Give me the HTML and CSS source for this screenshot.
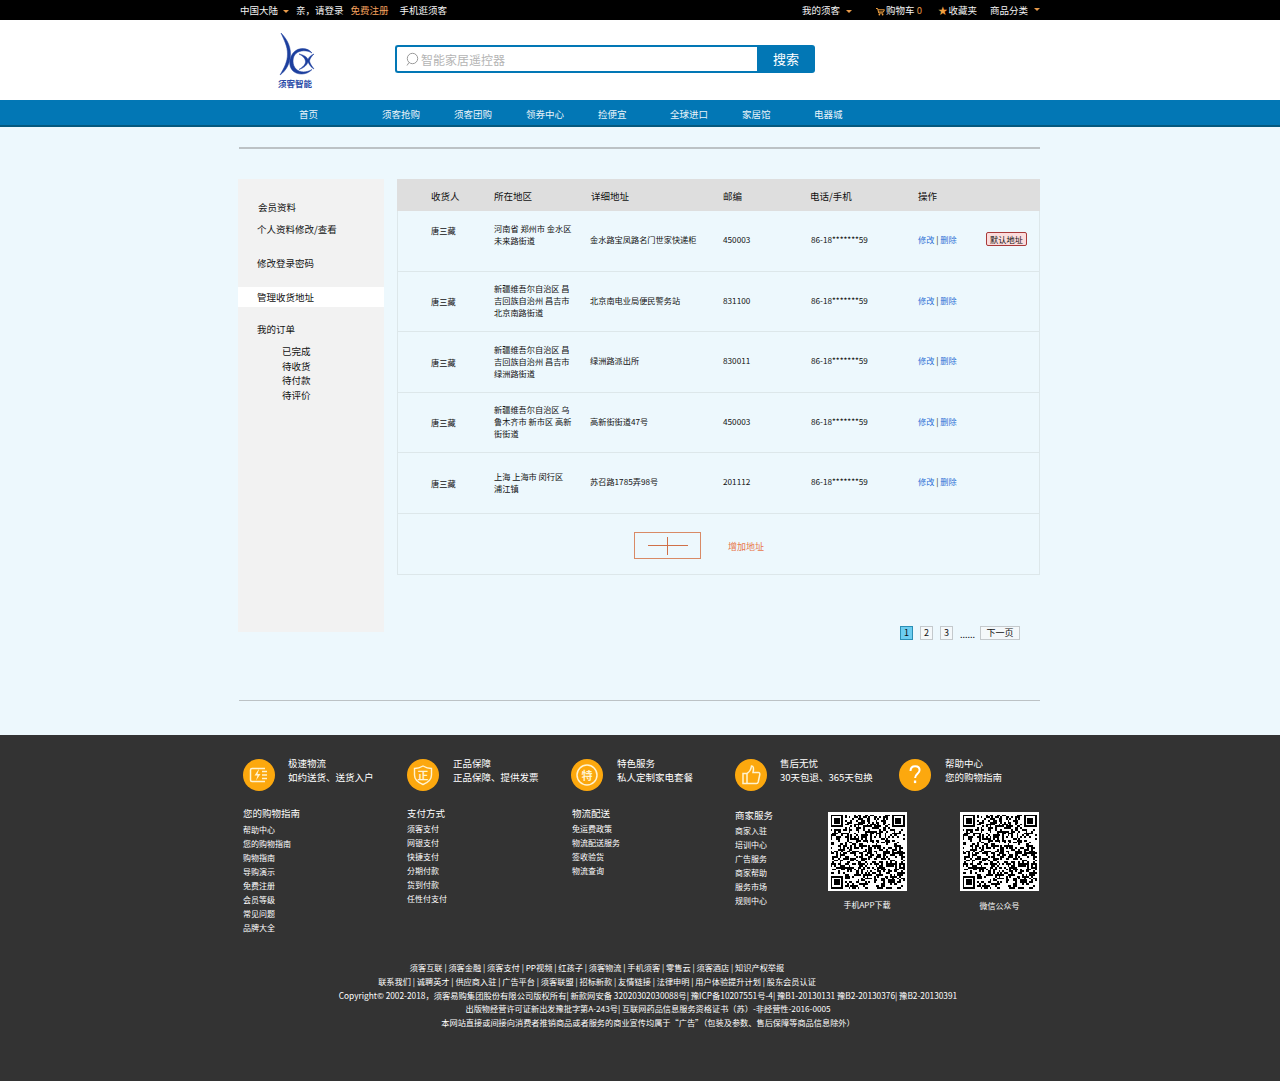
FILE: index.html
```html
<!DOCTYPE html>
<html lang="zh-CN">
    <head>
        <meta charset="UTF-8" />
        <title>管理收货地址</title>
        <link rel="stylesheet" href="styles.css">
    </head>
    <body>
        <div class="topbar">
            <div class="topbar-inner">
                <span>中国大陆</span><i class="caret first-caret"></i>
                <span class="login">亲，请登录</span>
                <span class="reg">免费注册</span>
                <span class="mobile">手机逛须客</span>
                <span class="top-right">
                    <span>我的须客</span><i class="caret my-caret"></i>
                    <svg class="cart" width="9" height="9" viewBox="0 0 9 9"><path d="M0 1.5h1.6l1.2 4.6h4.4M2 2.8h6.4l-1 2.2H2.6" fill="none" stroke="#f0a040" stroke-width="1"/><circle cx="3.4" cy="7.6" r="0.9" fill="#f0a040"/><circle cx="6.6" cy="7.6" r="0.9" fill="#f0a040"/></svg>
                    <span class="cart-text">购物车 <em>0</em></span>
                    <span class="star">★</span><span>收藏夹</span>
                    <span class="cats">商品分类</span><i class="caret cat-caret"></i>
                </span>
            </div>
        </div>

        <div class="header">
            <div class="logo">
                <svg width="40" height="50" viewBox="0 0 40 50">
                    <path class="logo-mark" d="M4 0C7 7 10.5 13 10.5 21C10.5 29 7 35 3 42C9 38 13.5 30 13.5 21C13.500 12 9 5 4 0Z"/>
                    <path class="logo-mark" d="M35 20C31 14.5 22 14 17 19C12 24 11 33 16 38C21 42.5 30 42 35 36.5C30 39.5 23 40 19 36C15 32 15 24 19 20.5C23 17 30 17 35 20Z"/>
                    <path class="logo-mark" d="M22 21C26 23 28 25 28.5 28C29 31 26 34 22 36.5C27 35 30 32 31 29C33 33 35 35 37 36C35 33 33 31 32.5 28C33 25 35 23 37 21C34 22 32 24 31 26.5C30 24 27 22 22 21Z"/>
                </svg>
                <div class="logo-text">须客智能</div>
            </div>
            <div class="search">
                <div class="search-input">
                    <svg width="15" height="15" viewBox="0 0 15 15"><circle cx="7.500" cy="6.500" r="5.200" fill="none" stroke="#9a9a9a" stroke-width="1"/><path d="M4 10.500L2 13.500" stroke="#9a9a9a" stroke-width="1"/></svg>
                    <span>智能家居遥控器</span>
                </div>
                <div class="search-btn">搜索</div>
            </div>
        </div>

        <div class="nav">
            <ul class="nav-list">
                <li class="home">首页</li>
                <li>须客抢购</li>
                <li>须客团购</li>
                <li>领券中心</li>
                <li>捡便宜</li>
                <li>全球进口</li>
                <li>家居馆</li>
                <li>电器城</li>
            </ul>
        </div>

        <div class="content">
            <div class="rule top-rule"></div>
            <div class="columns">
                <div class="sidebar">
                    <div class="side-title">会员资料</div>
                    <div class="side-item">个人资料修改/查看</div>
                    <div class="side-item pwd">修改登录密码</div>
                    <div class="side-item active">管理收货地址</div>
                    <div class="side-item orders">我的订单</div>
                    <ul class="side-sub">
                        <li>已完成</li>
                        <li>待收货</li>
                        <li>待付款</li>
                        <li>待评价</li>
                    </ul>
                </div>
                <div class="main">
                    <table class="addr">
                        <colgroup>
                            <col class="c1"><col class="c2"><col class="c3"><col class="c4"><col class="c5"><col class="c6"><col class="c7">
                        </colgroup>
                        <tr class="head">
                            <th>收货人</th><th>所在地区</th><th class="th-detail">详细地址</th><th>邮编</th><th class="th-phone">电话/手机</th><th colspan="2">操作</th>
                        </tr>
                        <tr>
                            <td class="name up">唐三藏</td>
                            <td class="region">河南省 郑州市 金水区 未来路街道<br>&nbsp;</td>
                            <td>金水路宝凤路名门世家快递柜</td>
                            <td>450003</td>
                            <td class="phone">86-18*******59</td>
                            <td class="ops"><a>修改</a> | <a>删除</a></td>
                            <td><span class="tag">默认地址</span></td>
                        </tr>
                        <tr>
                            <td class="name">唐三藏</td>
                            <td class="region">新疆维吾尔自治区 昌吉回族自治州 昌吉市 北京南路街道</td>
                            <td>北京南电业局便民警务站</td>
                            <td>831100</td>
                            <td class="phone">86-18*******59</td>
                            <td class="ops"><a>修改</a> | <a>删除</a></td>
                            <td></td>
                        </tr>
                        <tr>
                            <td class="name">唐三藏</td>
                            <td class="region">新疆维吾尔自治区 昌吉回族自治州 昌吉市 绿洲路街道</td>
                            <td>绿洲路派出所</td>
                            <td>830011</td>
                            <td class="phone">86-18*******59</td>
                            <td class="ops"><a>修改</a> | <a>删除</a></td>
                            <td></td>
                        </tr>
                        <tr>
                            <td class="name">唐三藏</td>
                            <td class="region">新疆维吾尔自治区 乌鲁木齐市 新市区 高新街街道</td>
                            <td>高新街街道47号</td>
                            <td>450003</td>
                            <td class="phone">86-18*******59</td>
                            <td class="ops"><a>修改</a> | <a>删除</a></td>
                            <td></td>
                        </tr>
                        <tr>
                            <td class="name">唐三藏</td>
                            <td class="region">上海 上海市 闵行区<br>浦江镇</td>
                            <td>苏召路1785弄98号</td>
                            <td>201112</td>
                            <td class="phone">86-18*******59</td>
                            <td class="ops"><a>修改</a> | <a>删除</a></td>
                            <td></td>
                        </tr>
                    </table>
                    <div class="add-row">
                        <div class="add-btn"><i class="plus-h"></i><i class="plus-v"></i></div>
                        <span class="add-text">增加地址</span>
                    </div>
                    <div class="pager">
                        <span class="page current">1</span>
                        <span class="page">2</span>
                        <span class="page">3</span>
                        <span class="dots">......</span>
                        <span class="page next">下一页</span>
                    </div>
                </div>
            </div>
            <div class="rule bottom-rule"></div>
        </div>

        <div class="footer">
            <div class="services">
                <div class="service">
                    <svg class="svc-icon" viewBox="0 0 32 32"><circle cx="16" cy="16" r="16" fill="#fca80e"/><path d="M22 9.500H9a1.500 1.500 0 0 0-1.500 1.500v10a1.500 1.500 0 0 0 1.500 1.500h13" fill="none" stroke="#fff3d0" stroke-width="1.500"/><path d="M15.500 10.500l-4 6h3l-1.500 5 4.500-6.500h-3l1.500-4.500z" fill="#fff3d0"/><path d="M19 12.500h5M19 16h5M19 19.500h5" stroke="#fff3d0" stroke-width="1.500"/></svg>
                    <div class="svc-text"><div>极速物流</div><div>如约送货、送货入户</div></div>
                </div>
                <div class="service">
                    <svg class="svc-icon" viewBox="0 0 32 32"><circle cx="16" cy="16" r="16" fill="#fca80e"/><path d="M7.500 9.500C11 9.500 13.500 8.500 16 7c2.500 1.500 5 2.500 8.500 2.500V16c0 4.500-3.500 7.500-8.500 9.500C11 23.500 7.500 20.500 7.500 16z" fill="none" stroke="#fff3d0" stroke-width="1.400"/><text class="svc-glyph" x="16" y="20.500">正</text></svg>
                    <div class="svc-text second"><div>正品保障</div><div>正品保障、提供发票</div></div>
                </div>
                <div class="service">
                    <svg class="svc-icon" viewBox="0 0 32 32"><circle cx="16" cy="16" r="16" fill="#fca80e"/><circle cx="16" cy="16" r="10" fill="none" stroke="#fff3d0" stroke-width="1.500"/><text class="svc-glyph" x="16" y="20.500">特</text></svg>
                    <div class="svc-text second"><div>特色服务</div><div>私人定制家电套餐</div></div>
                </div>
                <div class="service">
                    <svg class="svc-icon" viewBox="0 0 32 32"><circle cx="16" cy="16" r="16" fill="#fca80e"/><path d="M8 14.500h4v10H8zM12 14.500c2.500-1.500 4-4 4.500-7.500 2 0 2.500 2 1.500 6.500h5.500c1 0 1.500 1 1.300 2l-1.600 7.500c-.2.800-.8 1.500-1.700 1.500H12" fill="none" stroke="#fff3d0" stroke-width="1.500"/></svg>
                    <div class="svc-text"><div>售后无忧</div><div>30天包退、365天包换</div></div>
                </div>
                <div class="service">
                    <svg class="svc-icon" viewBox="0 0 32 32"><circle cx="16" cy="16" r="16" fill="#fca80e"/><path d="M11.500 12c0-3 2-4.800 4.700-4.800 2.600 0 4.400 1.600 4.400 3.900 0 3.600-4.500 3.800-4.500 7.900" fill="none" stroke="#fff" stroke-width="2"/><rect x="14.900" y="21.500" width="2.300" height="2.600" fill="#fff"/></svg>
                    <div class="svc-text second"><div>帮助中心</div><div>您的购物指南</div></div>
                </div>
            </div>

            <div class="guide">
                <ul class="guide-col help">
                    <li class="guide-title">您的购物指南</li>
                    <li>帮助中心</li><li>您的购物指南</li><li>购物指南</li><li>导购演示</li><li>免费注册</li><li>会员等级</li><li>常见问题</li><li>品牌大全</li>
                </ul>
                <ul class="guide-col">
                    <li class="guide-title">支付方式</li>
                    <li>须客支付</li><li>网银支付</li><li>快捷支付</li><li>分期付款</li><li>货到付款</li><li>任性付支付</li>
                </ul>
                <ul class="guide-col ship">
                    <li class="guide-title">物流配送</li>
                    <li>免运费政策</li><li>物流配送服务</li><li>签收验货</li><li>物流查询</li>
                </ul>
                <ul class="guide-col seller">
                    <li class="guide-title">商家服务</li>
                    <li>商家入驻</li><li>培训中心</li><li>广告服务</li><li>商家帮助</li><li>服务市场</li><li>规则中心</li>
                </ul>
                <div class="qr-box app">
                    <svg class="qr" viewBox="0 0 41 41" shape-rendering="crispEdges"></svg>
                    <div class="qr-cap">手机APP下载</div>
                </div>
                <div class="qr-box wx">
                    <svg class="qr" viewBox="0 0 41 41" shape-rendering="crispEdges"></svg>
                    <div class="qr-cap">微信公众号</div>
                </div>
            </div>

            <div class="legal">
                <p class="legal-links">须客互联 | 须客金融 | 须客支付 | PP视频 | 红孩子 | 须客物流 | 手机须客 | 零售云 | 须客酒店 | 知识产权举报</p>
                <p class="legal-links">联系我们 | 诚聘英才 | 供应商入驻 | 广告平台 | 须客联盟 | 招标新款 | 友情链接 | 法律申明 | 用户体验提升计划 | 股东会员认证</p>
                <p class="copyright">Copyright© 2002-2018，须客易购集团股份有限公司版权所有| 新款网安备 32020302030088号| 豫ICP备10207551号-4| 豫B1-20130131 豫B2-20130376| 豫B2-20130391</p>
                <p>出版物经营许可证新出发豫批字第A-243号| 互联网药品信息服务资格证书（苏）-非经营性-2016-0005</p>
                <p>本网站直接或间接向消费者推销商品或者服务的商业宣传均属于“广告”（包装及参数、售后保障等商品信息除外）</p>
            </div>
        </div>
        <script src="qr.js"></script>
    </body>
</html>
```

FILE: styles.css
```css
* {
    box-sizing: border-box;
}

body {
    margin: 0;
    background-color: #edf8fd;
    font-family: "Noto Sans CJK SC", "Liberation Sans", sans-serif;
    font-size: 8px;
    color: #111;
}

ul {
    margin: 0;
    padding: 0;
    list-style: none;
}

/* top bar */
.topbar {
    height: 20px;
    background-color: #000;
    color: #f4f4f4;
    font-size: 9.500px;
    line-height: 21px;
}

.topbar-inner {
    width: 800px;
    margin-left: 240px;
    display: flex;
}

.caret {
    width: 0;
    height: 0;
    margin-top: 10px;
    border-left: 3px solid transparent;
    border-right: 3px solid transparent;
    border-top: 3px solid #e89a4a;
}

.first-caret {
    margin-left: 5px;
    margin-right: 7px;
}

.reg {
    margin-left: 7px;
    color: #f6a25e;
}

.mobile {
    margin-left: 11px;
}

.top-right {
    margin-left: auto;
    display: flex;
}

.my-caret {
    margin-left: 6px;
    margin-right: 24px;
}

.cart {
    margin-top: 7px;
    margin-right: 1px;
}

.cart-text em {
    font-style: normal;
    color: #e89a4a;
}

.star {
    margin-left: 16px;
    margin-right: 1px;
    color: #f0a040;
}

.cats {
    margin-left: 13px;
}

.cat-caret {
    margin-left: 6px;
    margin-top: 8px;
}

/* header */
.header {
    height: 80px;
    background-color: #fff;
    display: flex;
}

.logo {
    width: 155px;
    margin-left: 240px;
    padding-top: 13px;
    padding-left: 37px;
}

.logo svg {
    display: block;
}

.logo-mark {
    fill: #1c3f9e;
    stroke: #1c3f9e;
    stroke-width: 0.500;
}

.logo-text {
    margin-top: -5px;
    margin-left: 1px;
    font-size: 8.500px;
    font-weight: 700;
    line-height: 11px;
    color: #2a4ba8;
}

.search {
    width: 420px;
    height: 28px;
    margin-top: 25px;
    display: flex;
}

.search-input {
    flex: 1;
    display: flex;
    align-items: center;
    gap: 1px;
    padding-left: 8px;
    border: 2px solid #0277b5;
    border-right: 0;
    border-radius: 3px 0 0 3px;
    color: #b4b4b4;
    font-size: 12px;
}

.search-btn {
    width: 58px;
    background-color: #0277b5;
    border-radius: 0 3px 3px 0;
    color: #fff;
    font-size: 13px;
    line-height: 28px;
    text-align: center;
}

/* nav */
.nav {
    height: 27px;
    background-color: #0277b5;
    border-bottom: 2px solid #04597f;
}

.nav-list {
    margin-left: 299px;
    display: flex;
    color: #eaf4fa;
    font-size: 9.500px;
    line-height: 28px;
}

.nav-list li {
    width: 72px;
}

.nav-list .home {
    width: 83px;
}

/* content */
.content {
    width: 802px;
    height: 608px;
    margin-left: 238px;
    padding-top: 20px;
}

.rule {
    height: 2px;
    background-color: #bcc2c5;
}

.top-rule {
    margin-left: 1px;
}

.columns {
    display: flex;
    margin-top: 30px;
}

.sidebar {
    width: 146px;
    height: 453px;
    margin-right: 13px;
    padding-top: 21px;
    background-color: #f2f2f2;
    font-size: 9.500px;
    line-height: 14px;
}

.side-title {
    margin-left: 20px;
}

.side-item {
    margin-top: 8px;
    padding-left: 19px;
}

.pwd {
    margin-top: 20px;
}

.active {
    margin-top: 17px;
    height: 20px;
    line-height: 20px;
    background-color: #fff;
}

.orders {
    margin-top: 15px;
}

.side-sub {
    margin-top: 8px;
    margin-left: 44px;
    line-height: 14.700px;
}

.main {
    width: 643px;
}

.addr {
    width: 643px;
    table-layout: fixed;
    border-collapse: separate;
    border-spacing: 0;
}

.c1 { width: 97px; }
.c2 { width: 96px; }
.c3 { width: 133px; }
.c4 { width: 87px; }
.c5 { width: 108px; }
.c6 { width: 68px; }
.c7 { width: 54px; }

.addr tr {
    height: 60.500px;
}

.addr .head {
    height: 32px;
    background-color: #dedede;
}

.addr th {
    padding: 1px 0 0;
    text-align: left;
    font-weight: normal;
    font-size: 9.500px;
}

.addr th:first-child {
    padding-left: 34px;
}

.addr .th-detail {
    padding-left: 1px;
}

.addr .th-phone {
    padding-top: 2px;
    margin-left: -1px;
}

.addr td {
    padding: 0 0 3px;
    border-bottom: 1px solid #dde7ea;
    line-height: 12px;
    font-size: 8.200px;
}

.addr td:first-child {
    border-left: 1px solid #dde7ea;
}

.addr td:last-child {
    border-right: 1px solid #dde7ea;
}

.addr .name {
    padding-left: 33px;
    padding-bottom: 0;
}

.addr .up {
    vertical-align: top;
    padding-top: 13px;
}

.addr .region {
    padding-right: 16px;
    padding-bottom: 2px;
}

.addr .phone {
    padding-left: 1px;
}

.ops a {
    color: #2f72d6;
}

.tag {
    display: block;
    width: 41px;
    height: 14px;
    background-color: #fbdcdc;
    border: 1px solid #a83a3a;
    border-radius: 2px;
    color: #111;
    text-align: center;
    line-height: 12px;
}

.add-row {
    height: 61px;
    padding-left: 237px;
    display: flex;
    align-items: center;
    border: 1px solid #dde7ea;
    border-top: 0;
}

.add-btn {
    width: 67px;
    height: 27px;
    margin-top: 3px;
    margin-left: -1px;
    border: 1px solid #d98a66;
    position: relative;
}

.plus-h {
    position: absolute;
    left: 13px;
    top: 12px;
    width: 40px;
    height: 1px;
    background-color: #d07048;
}

.plus-v {
    position: absolute;
    left: 32px;
    top: 4px;
    width: 1px;
    height: 18px;
    background-color: #d07048;
}

.add-text {
    margin-left: 27px;
    margin-top: 5px;
    color: #e8764a;
    font-size: 9px;
}

.pager {
    margin-top: 51px;
    padding-right: 20px;
    display: flex;
    justify-content: flex-end;
    gap: 7px;
    font-size: 9px;
    line-height: 11px;
}

.page {
    width: 13px;
    height: 14px;
    background-color: #f4f8fa;
    border: 1px solid #c4c9cc;
    text-align: center;
}

.current {
    background-color: #6ccdf0;
    border-color: #2a8fb5;
}

.dots {
    width: 13px;
    padding-top: 3px;
}

.next {
    width: 40px;
}

.bottom-rule {
    height: 1px;
    margin-top: 60px;
    margin-left: 1px;
}

/* footer */
.footer {
    height: 346px;
    padding-top: 24px;
    background-color: #333;
    color: #fff;
}

.services {
    margin-left: 243px;
    display: flex;
}

.service {
    width: 164px;
    display: flex;
}

.svc-icon {
    width: 32px;
    height: 32px;
}

.svc-text {
    margin-left: 13px;
    margin-top: -3px;
    font-size: 9.500px;
    line-height: 14px;
}

.svc-text.second {
    margin-left: 14px;
}

.svc-glyph {
    font-size: 11px;
    font-weight: 700;
    fill: #fff3d0;
    text-anchor: middle;
}

.guide {
    margin-left: 243px;
    margin-top: 15px;
    display: flex;
}

.guide-col {
    width: 164px;
    font-size: 8px;
    line-height: 14px;
}

.guide-title {
    font-size: 9.500px;
    margin-bottom: 2px;
}

.help .guide-title {
    margin-bottom: 3px;
}

.ship {
    padding-left: 1px;
}

.seller {
    width: 93px;
    margin-top: 2px;
}

.qr-box {
    width: 79px;
    margin-top: 6px;
    text-align: center;
}

.app {
    margin-right: 54px;
}

.qr {
    display: block;
    width: 79px;
    height: 79px;
    padding: 2.500px;
    background-color: #fff;
}

.qr-cap {
    margin-top: 8px;
    margin-left: -1px;
    font-size: 8px;
    line-height: 12px;
}

.wx {
    margin-left: -1px;
}

.wx .qr-cap {
    margin-top: 9px;
    margin-left: 0;
}

.legal {
    width: 800px;
    margin-left: 248px;
    margin-top: 26px;
    font-size: 8.200px;
    line-height: 13.800px;
    text-align: center;
}

.legal p {
    margin: 0;
}

.legal .legal-links {
    padding-right: 102px;
}

.legal .copyright {
    font-size: 8.300px;
}
```

FILE: qr.js
```js
// draws the same fake qr matrix into every .qr svg
const size = 41;
let seed = 20180;

function rand() {
    seed = (seed * 1103515245 + 12345) % 2147483648;
    return seed / 2147483648;
}

function inFinder(x, y) {
    const near = (v) => v < 8;
    const far = (v) => v >= size - 8;
    return (near(x) && near(y)) || (far(x) && near(y)) || (near(x) && far(y));
}

function finder(ox, oy) {
    let d = 'M' + ox + ' ' + oy + 'h7v7h-7z';
    d += 'M' + (ox + 1) + ' ' + (oy + 1) + 'v5h5v-5z';
    d += 'M' + (ox + 2) + ' ' + (oy + 2) + 'h3v3h-3z';
    return d;
}

let d = finder(0, 0) + finder(size - 7, 0) + finder(0, size - 7);
for (let y = 0; y < size; y++) {
    for (let x = 0; x < size; x++) {
        if (!inFinder(x, y) && rand() > 0.52) {
            d += 'M' + x + ' ' + y + 'h1v1h-1z';
        }
    }
}

document.querySelectorAll('.qr').forEach((svg) => {
    const path = document.createElementNS('http://www.w3.org/2000/svg', 'path');
    path.setAttribute('d', d);
    path.setAttribute('fill-rule', 'evenodd');
    svg.appendChild(path);
});
```
